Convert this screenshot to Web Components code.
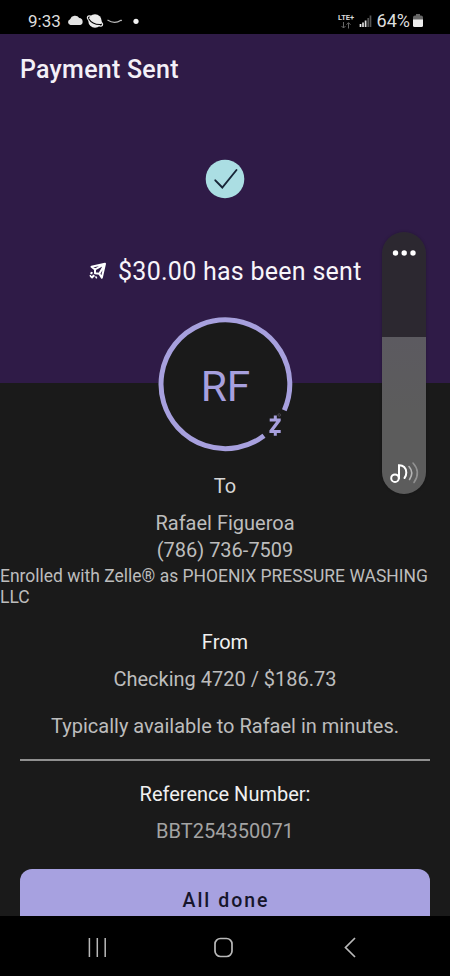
<!DOCTYPE html>
<html lang="en">
<head>
<meta charset="utf-8">
<title>Payment Sent</title>
<style>
body { margin: 0; background: #1a1a1a; font-family: Roboto, "Liberation Sans", sans-serif; }
</style>
</head>
<body>
<payment-screen></payment-screen>
<script>
class TextLine extends HTMLElement {
  connectedCallback() {
    const a = (n, d) => this.getAttribute(n) || d;
    const root = this.attachShadow({ mode: 'open' });
    root.innerHTML = `<style>
      :host { display: block; text-align: ${a('align', 'center')}; font-size: ${a('size', '20')}px;
        line-height: ${a('line', '27')}px; font-weight: ${a('weight', '400')};
        letter-spacing: ${a('spacing', '0')}px; color: ${a('color', '#bdbdbd')}; white-space: pre-line; }
    </style><span><slot></slot></span>`;
  }
}
customElements.define('text-line', TextLine);

const define = (name, html) => customElements.define(name, class extends HTMLElement {
  constructor() { super(); this.attachShadow({ mode: 'open' }).innerHTML = html; }
});

define('status-bar', `<style>
  :host { display: flex; height: 34px; background: #000; box-sizing: border-box; padding: 8px 27px 0 28px; align-items: center; justify-content: space-between; }
  div { display: flex; align-items: center; }
  svg { display: block; }
  .net { width: 17px; flex-direction: column; margin-right: 4px; }
</style>
<div><text-line size="17" line="34" color="#dedede">9:33</text-line>
<svg width="80" height="34" viewBox="61 4 80 34">
  <path d="M70.500 25a3 3 0 0 1-.4-5.800 5.200 5.200 0 0 1 9.200-1.200 3.600 3.600 0 0 1 .9 7z" fill="#e4e4e4"/>
  <circle cx="95" cy="21" r="6.700" fill="#ececec"/>
  <ellipse cx="95" cy="21" rx="8.600" ry="2.900" transform="rotate(30 95 21)" fill="none" stroke="#ececec" stroke-width="1.200"/>
  <path d="M88.500 18.500q4 6.500 12.500 6" fill="none" stroke="#000" stroke-width="1.100"/>
  <path d="M107.500 20q7 4.500 13.500.2l.8.600" fill="none" stroke="#bbb" stroke-width="1.200"/>
  <circle cx="136" cy="21.300" r="2.600" fill="#f2f2f2"/>
</svg></div>
<div><div class="net"><text-line size="7.500" line="9" weight="700" color="#d8d8d8">LTE+</text-line>
<svg width="12" height="7" viewBox="0 0 12 7"><path d="M3.500 0v6M1.500 4l2 2 2-2M8.500 6.500V.7M6.500 2.700l2-2 2 2" fill="none" stroke="#666"/></svg></div>
<svg width="14" height="14" viewBox="0 0 14 14"><path d="M1.500 10v3" stroke="#eee" stroke-width="1.700"/><path d="M4 8.500V13M6.600 6.500V13" stroke="#ddd" stroke-width="1.700"/><path d="M9.200 4v9M11.500 1.500V13" stroke="#555" stroke-width="1.700"/></svg>
<text-line size="18" line="34" color="#dedede" style="margin:0 3px 0 4px">64%</text-line>
<svg width="10" height="14" viewBox="0 0 10 14"><path d="M3 0h4v1.500h1a2 2 0 0 1 2 2V6H0V3.500a2 2 0 0 1 2-2h1z" fill="#666"/><path d="M0 5.500h10v6a1.500 1.500 0 0 1-1.500 1.500h-7A1.500 1.500 0 0 1 0 11.500z" fill="#eee"/></svg></div>`);

define('sent-hero', `<style>
  :host { display: block; height: 350px; background: #2f1b47; box-sizing: border-box; padding-top: 21px; }
  .title { padding-left: 20px; }
  .check { display: block; margin: 74px auto 0; }
  .sent { display: flex; align-items: center; margin-top: 57px; padding-left: 89px; gap: 11px; }
  .sent svg { margin-top: -2px; }
</style>
<text-line class="title" align="left" size="25" line="30" weight="500" spacing="0.250" color="#f4f0f7">Payment Sent</text-line>
<svg class="check" width="40" height="40" viewBox="0 0 40 40"><circle cx="20" cy="20" r="19.300" fill="#abdee3"/><path d="M10.300 21.300l7 7.200L31.500 11" fill="none" stroke="#182638" stroke-width="1.900" stroke-linecap="round"/></svg>
<div class="sent"><svg width="18" height="18" viewBox="0 0 18 18" fill="none" stroke="#fff" stroke-width="2" stroke-linejoin="round"><path d="M16 1.800L2.500 4.800l3.500 2.700v3.700l4.300.5 2.500 4zM16 1.800L6 7.500M16 1.800l-5.700 9.900"/><path d="M1.500 10.800l2 .6M2.300 16l3-2.800M6.500 15.800l1.300-.8M.8 14.300l1.500-.5" stroke-width="2.200"/></svg>
<text-line align="left" size="25" line="32" spacing="0.270" color="#f8f5fa">$30.00 has been sent</text-line></div>`);

define('contact-avatar', `<style>
  :host { display: block; width: 136px; height: 136px; margin: -67px auto 0; position: relative; }
  svg { display: block; }
  text-line { position: absolute; inset: 47px 0 auto 1px; }
</style>
<svg width="136" height="136" viewBox="0 0 136 136"><circle cx="68.300" cy="68.300" r="66.800" fill="#1a1a1a"/>
<path d="M127.300 94.300A64.400 64.400 0 1 0 107 119.800" fill="none" stroke="#a7a0de" stroke-width="5"/>
<path d="M112.700 102.500h11v2.600l-6.800 8.800h6.800v3.100h-11.300v-2.600l6.800-8.800h-6.500zM116.800 99.500h3v4h-3zM116.800 116h3v3.800h-3z" fill="#a7a0de"/>
<circle cx="122.200" cy="99" r="1.300" fill="none" stroke="#66626f" stroke-width=".6"/></svg>
<text-line size="42.500" line="47" color="#a7a0de">RF</text-line>`);

define('payment-details', `<style>
  :host { display: block; padding-top: 21px; }
  hr { margin: 19px 20px 20px; height: 2px; border: 0; background: #909090; }
  .from { margin-top: 22px; } .gap { margin-top: 10px; } .note { margin-top: 20px; }
</style>
<text-line color="#d6d6d6">To</text-line>
<text-line class="gap">Rafael Figueroa</text-line>
<text-line>(786) 736-7509</text-line>
<text-line align="left" size="17.480" line="20.500" style="margin-top:2px">Enrolled with Zelle® as PHOENIX PRESSURE WASHING
LLC</text-line>
<text-line class="from" color="#f0f0f0">From</text-line>
<text-line class="gap">Checking 4720 / $186.73</text-line>
<text-line class="note">Typically available to Rafael in minutes.</text-line>
<hr>
<text-line color="#f0f0f0">Reference Number:</text-line>
<text-line class="gap" color="#a3a3a3">BBT254350071</text-line>`);

define('done-button', `<style>
  :host { display: block; margin: 24px 20px 0; height: 47px; box-sizing: border-box; padding: 18px 0 0 2px; border-radius: 12px 12px 0 0; background: #a7a1e0; }
</style><text-line size="19.500" weight="500" spacing="2" color="#16152b"><slot></slot></text-line>`);

define('volume-slider', `<style>
  :host { position: absolute; left: 382px; top: 232px; width: 44px; height: 262px; border-radius: 22px; overflow: hidden; background: linear-gradient(#2c2830 105px, #5c5a60 105px, #5c5c5c 180px); box-shadow: 0 0 3px #0004; }
  svg { display: block; }
</style>
<svg width="44" height="262" viewBox="0 0 44 262" fill="none" stroke-linecap="round"><g fill="#fff"><circle cx="13.500" cy="21" r="2.700"/><circle cx="22.200" cy="21" r="2.700"/><circle cx="31" cy="21" r="2.700"/></g>
<g stroke="#fff" stroke-width="2"><circle cx="13" cy="246.200" r="3.800"/><path d="M17 246.200V233.200C21 233 24.300 236 24.300 240.500c0 2-.5 4-1.800 5.500"/></g>
<path d="M27 234.500c3.500 4 3.500 8.500.5 13" stroke="#b5b5b5" stroke-width="1.600"/><path d="M31 231c5.500 6 5.500 13 1 19.500" stroke="#919191" stroke-width="1.600"/></svg>`);

define('nav-bar', `<style>
  :host { display: block; height: 60px; background: #000; }
  svg { display: block; }
</style>
<svg width="450" height="60" viewBox="0 0 450 60" fill="none" stroke="#b9b9b9" stroke-width="1.700"><path d="M89.400 22v19M97.300 22v19M105.200 22v19" stroke-width="1.500"/><rect x="215" y="22.500" width="17" height="18" rx="5.500"/><path d="M355 22l-9.500 9.500 9.500 9.500"/></svg>`);

define('payment-screen', `<style>
  :host { display: flex; flex-direction: column; width: 450px; height: 976px; overflow: hidden; position: relative; background: #1a1a1a; }
  nav-bar { margin-top: auto; }
</style>
<status-bar></status-bar><sent-hero></sent-hero><contact-avatar></contact-avatar>
<payment-details></payment-details><done-button>All done</done-button><nav-bar></nav-bar><volume-slider></volume-slider>`);
</script>
</body>
</html>
